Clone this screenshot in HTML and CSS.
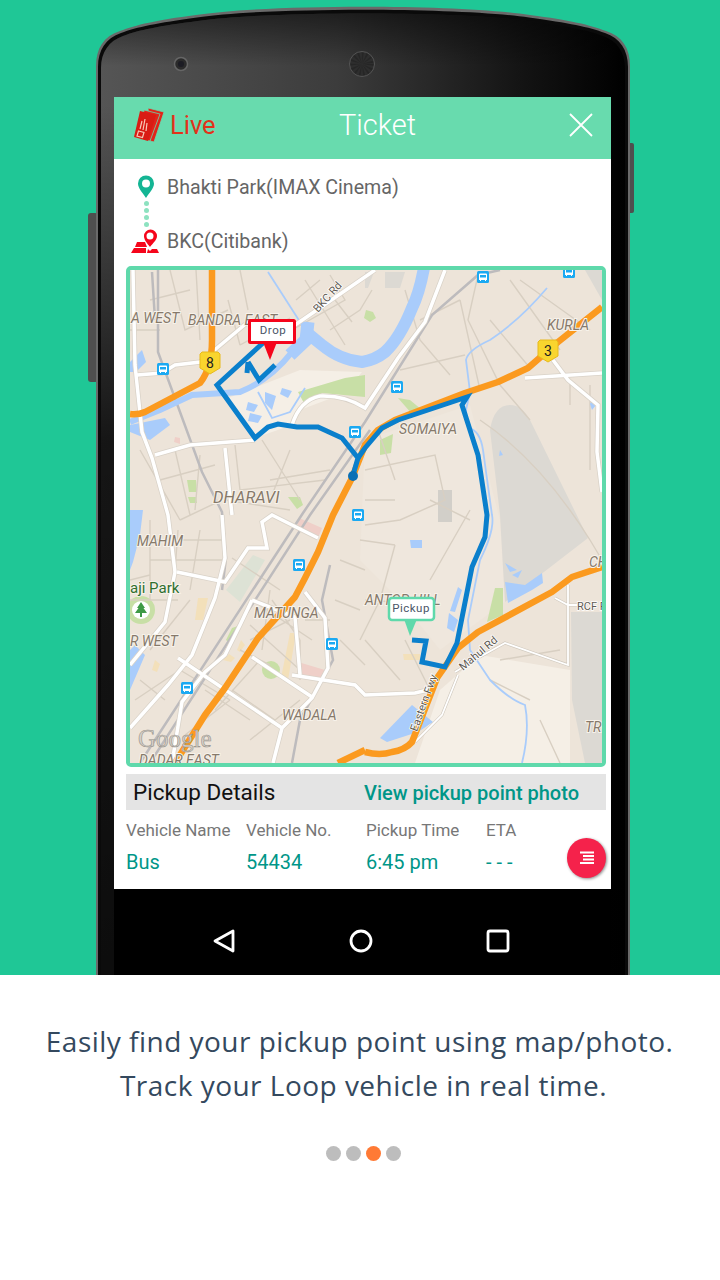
FILE: index.html
```html
<!DOCTYPE html>
<html lang="en">
<head>
  <meta charset="UTF-8" />
  <meta name="viewport" content="width=device-width, initial-scale=1.0" />
  <title>Loop - Live Ticket</title>
  <link rel="stylesheet" href="styles.css">
</head>
<body>

<section class="hero">
  <div class="phone">
    <svg class="phone-shell" width="552" height="967" viewBox="-10 0 552 967">
      <defs>
        <linearGradient id="bezel" x1="0" y1="0" x2="1" y2="0">
          <stop offset="0" stop-color="#555" />
          <stop offset="0.45" stop-color="#3c3c3c" />
          <stop offset="0.8" stop-color="#141414" />
          <stop offset="1" stop-color="#000" />
        </linearGradient>
        <linearGradient id="bezel-shade" gradientUnits="userSpaceOnUse" x1="0" y1="0" x2="0" y2="967">
          <stop offset="0" stop-color="#000" stop-opacity="0.55" />
          <stop offset="0.06" stop-color="#000" stop-opacity="0" />
          <stop offset="0.1" stop-color="#000" stop-opacity="0" />
          <stop offset="0.45" stop-color="#000" stop-opacity="0.75" />
          <stop offset="1" stop-color="#000" stop-opacity="0.85" />
        </linearGradient>
      </defs>
      <rect class="side-btn" x="-8" y="205" width="10" height="169" rx="3" />
      <rect class="side-btn" x="532" y="135" width="6" height="70" rx="2" />
      <path class="shell-rim" d="M0 967V58C0 40 8 28 24 23C40 17 60 12 100 7C170 -4 364 -4 434 7C474 12 494 17 510 23C526 28 534 40 534 58V967Z" />
      <path class="shell-line" d="M2 967V59C2 42 10 30 25 25C41 19 61 15 101 9.500C170 -1 364 -1 433 9.500C473 15 493 19 509 25C524 30 532 42 532 59V967Z" />
      <path class="shell-face" d="M5 967V60C5 44 13 33 27 28C43 22 63 18 102 13C170 3 364 3 432 13C471 18 491 22 507 28C521 33 529 44 529 60V967Z" />
      <path class="shell-shade" d="M5 967V60C5 44 13 33 27 28C43 22 63 18 102 13C170 3 364 3 432 13C471 18 491 22 507 28C521 33 529 44 529 60V967Z" />
      <circle class="camera" cx="85" cy="56" r="6.500" />
      <circle class="camera-lens" cx="85" cy="56" r="3" />
      <circle class="speaker" cx="266" cy="56" r="12.500" />
      <circle class="speaker-mesh" cx="266" cy="56" r="6" />
    </svg>

    <div class="screen">
      <header class="ticket-bar">
        <div class="live">
          <svg class="ticket-icon" width="32" height="36" viewBox="0 0 32 36">
            <path class="ticket-back" d="M14 1L30 5L20 35L16 34Z" />
            <path class="ticket-back" d="M10 3L26 7L16 34L6 32Z" />
            <path class="ticket-front" d="M6 4L22 8L14 34L0 30Z" />
            <path class="ticket-mark" d="M6 22L8 14M9 23L11 12M12 24L13 16" />
            <path class="ticket-mark" d="M4.500 24L10 25.500L8.500 30.500L3 29Z" />
          </svg>
          <span>Live</span>
        </div>
        <h1>Ticket</h1>
        <svg class="close-icon" width="24" height="24" viewBox="0 0 24 24">
          <path d="M1 1L23 23M23 1L1 23" />
        </svg>
      </header>

      <div class="route">
        <div class="route-row">
          <svg class="route-icon" width="32" height="26" viewBox="0 0 32 26">
            <path class="pin-start" fill-rule="evenodd" d="M16 24C12 18 8 14 8 9.500A8 8 0 0 1 24 9.500C24 14 20 18 16 24ZM16 5.500A4 4 0 1 0 16 13.500A4 4 0 0 0 16 5.500Z" />
          </svg>
          <span>Bhakti Park(IMAX Cinema)</span>
        </div>
        <div class="route-dots"><i></i><i></i><i></i><i></i></div>
        <div class="route-row">
          <svg class="route-icon" width="32" height="26" viewBox="0 0 32 26">
            <path class="pin-end" fill-rule="evenodd" d="M20 19C17 15 14 12 14 8A6.500 6.500 0 0 1 27 8C27 12 23 15 20 19ZM20 4.500A3.500 3.500 0 1 0 20 11.500A3.500 3.500 0 0 0 20 4.500Z" />
            <path class="pin-end" d="M7 14H15L17 19H5ZM4 20H16L16 25H1ZM18 21L20 23L22 21H27L29 25H17Z" />
          </svg>
          <span>BKC(Citibank)</span>
        </div>
      </div>

      <div class="map">
        <svg class="map-svg" width="472" height="493" viewBox="130 270 472 493">
          <defs>
            <symbol id="bus" viewBox="0 0 12 12">
              <rect class="bus-bg" width="12" height="12" rx="1.500" />
              <path class="bus-body" d="M3 2.500H9Q10 2.500 10 3.500V9H9V10H8V9H4V10H3V9H2V3.500Q2 2.500 3 2.500Z" />
              <rect class="bus-bg" x="3" y="4" width="6" height="2.500" />
            </symbol>
            <symbol id="shield" viewBox="0 0 22 24">
              <path class="shield" d="M3 1H19L21 3V17L11 23L1 17V3Z" />
            </symbol>
          </defs>

          <rect class="land" x="130" y="270" width="472" height="493" />
          <path class="land-light" d="M440 690L480 655L570 670V763H415Z" />
          <path class="land-light" d="M228 398L300 370L362 372L345 393L300 410L292 425L255 438Z" />
          <path class="land-mid" d="M365 440L470 405L500 520L505 602L440 650L400 600L360 560Z" />

          <!-- airport and grey blocks -->
          <path class="grey-block" d="M490 430Q494 405 510 405Q522 405 530 420L588 538L505 602L500 515Z" />
          <path class="grey-block" d="M571 612H602V763H585L572 700Z" />
          <path class="grey-dark" d="M438 490H452V522H438Z" />
          <path class="grey-block" d="M385 272H405L400 288H385Z" />
          <path class="grey-block" d="M585 270H602V300Z" />
          <path class="grey-block" d="M365 272H374L368 288H365Z" />

          <!-- parks and building blocks -->
          <path class="park" d="M298 392L345 378L365 375V397L322 393L305 405Z" />
          <path class="park" d="M398 398L410 400L422 410L412 414Z" />
          <path class="park" d="M380 440L393 434L391 453L380 455Z" />
          <path class="park" d="M187 480H196L197 492H189Z" />
          <path class="park" d="M188 497H196L197 503H190Z" />
          <path class="park" d="M288 497H300L303 505L297 509Z" />
          <path class="park" d="M495 588H503V615L487 622Z" />
          <path class="park" d="M232 628L238 626L232 645L226 640Z" />
          <path class="park" d="M366 310L373 312L376 318L370 322L364 318Z" />
          <path class="park-pale" d="M226 590L253 555L265 560L240 602Z" />
          <circle class="park" cx="141" cy="610" r="14" />
          <circle class="park" cx="271" cy="670" r="9" />
          <path class="block-tan" d="M198 598L208 598L203 620H195Z" />
          <path class="block-tan" d="M290 633L296 633L288 680L281 678Z" />
          <path class="block-tan" d="M403 654H420L420 660H404Z" />
          <path class="block-tan" d="M241 640L245 645L240 652L237 650Z" />
          <path class="block-tan" d="M229 654L235 658L231 662L223 660Z" />
          <path class="block-tan" d="M155 660L160 664L157 672L152 670Z" />
          <path class="block-pink" d="M299 518L322 528L318 538L296 530Z" />
          <path class="block-pink" d="M298 662L325 670L320 680L298 678Z" />
          <path class="block-pink" d="M175 437L180 438L180 444L174 442Z" />

          <!-- minor streets -->
          <g class="minor">
            <path d="M240 270L248 310M292 330L345 300L330 275M330 330L360 310L372 290M305 280L345 345M335 300L352 322M320 280L296 300" />
            <path d="M130 330H160M170 270L185 330L228 310M228 300L240 345M196 270L200 340M150 300L190 290M240 345L290 318" />
            <path d="M140 450L180 520M180 520L222 500M160 480L215 465M175 450L190 515M200 455L195 510" />
            <path d="M225 500L290 510M270 480L330 470M235 445L240 490M290 450L270 500M240 490L325 480M262 440L300 500" />
            <path d="M150 520L150 600M150 560H225M200 530L190 590M130 600H178M190 600L150 650M232 558L280 590M155 540H222M130 580L150 575M178 530L175 570" />
            <path d="M252 600L312 640M270 590L262 650M305 620H330M250 640L290 620M300 640V680M272 600L300 640M250 625L300 670M240 650L270 665" />
            <path d="M135 700L180 670M205 690L250 720M230 700L185 735M250 740L300 700M260 660L215 710M232 690L275 720M180 670L230 700M140 680L165 700" />
            <path d="M365 470L435 455L445 500L400 520L365 525M378 430L395 480M360 540L395 545M395 545L380 600M365 500L395 500" />
            <path d="M365 600L440 605M380 600L360 640M405 640L430 690M430 500L470 520M470 510L430 580M365 640L400 680M340 640L365 665" />
            <path d="M490 320L530 368M460 300L480 390M510 280L560 350M520 280L590 330M570 380V405M405 290L420 340L450 375M420 320L460 300M400 370L465 355" />
            <path d="M500 660L560 650M490 680L530 700M540 720L560 763M340 560L365 570M335 600L360 610" />
            <path d="M480 420Q540 460 590 540M478 275L468 320L500 385L530 420M590 540L602 560M590 385V470" />
          </g>

          <!-- rails -->
          <g class="rail">
            <path d="M140 763L303 513L365 422L432 315L478 275L500 270" />
            <path d="M150 763L310 515L370 430" />
            <path d="M158 270L158 352L202 472L222 512L226 558L222 590" />
            <path d="M330 565L322 600L333 660L300 720L292 763" />
            <path d="M152 272L155 320" />
          </g>

          <!-- water -->
          <path class="water-wide" d="M425 262Q420 292 412 308Q400 338 385 352Q375 360 362 362Q340 360 322 345L306 332" />
          <path class="water-fork" d="M308 322L306 340L290 355" />
          <path class="water-west" d="M292 352Q270 380 240 392L192 395L160 410L130 422" />
          <path class="water-thin" d="M268 272L302 325" />
          <path class="water-thin" d="M258 392L272 418L290 412L305 388" />
          <path class="water-fill" d="M130 362L142 350L146 362L136 372L130 372Z" />
          <path class="water-mid" d="M130 425L165 418L170 425L150 440L130 432" />
          <path class="water-fill" d="M130 510H143L140 535L133 562L130 570ZM130 690L145 655L135 645L130 650Z" />
          <path class="water-fill" d="M248 402L258 405L254 412L246 410ZM250 413L262 416L258 423L248 421ZM282 388L292 391L288 398L280 394ZM265 392L276 396L272 410L265 403Z" />
          <path class="water-fill" d="M458 587L462 590L455 612L450 611ZM449 613L458 620L454 632L447 628ZM410 540H422V548H411Z" />
          <path class="water-fill" d="M505 582L525 585L542 573L543 583L532 590L508 603ZM505 563L517 570L510 572ZM512 575L522 570L518 578Z" />
          <path class="water-fill" d="M412 705L433 722L418 732L387 742L380 738Z" />
          <path class="water-fill" d="M592 400L596 405L592 410L590 404ZM500 450L503 455L499 456Z" />
          <path class="water-thin" d="M547 288Q520 320 490 340Q468 350 466 360L470 392L466 410L468 428Q480 430 483 450L492 515Q495 530 480 560L468 620L470 650L490 680Q510 700 525 705Q530 730 522 763" />

          <!-- main white roads -->
          <g class="road-case">
            <path d="M133 270L135 365L142 432L152 458L168 515L175 572L165 622L130 665" />
            <path d="M222 515L225 558L215 598L192 655L168 685L130 728" />
            <path d="M445 270L425 322L398 358L365 408Q345 395 320 396Q300 400 292 425" />
            <path d="M177 572L225 582L248 548L267 548L262 522L272 515L318 538" />
            <path d="M252 600L240 625L225 655L205 672L182 702L172 763" />
            <path d="M305 592L325 618L328 668L312 698L282 728L273 763" />
            <path d="M178 658L282 728M252 657L312 697M292 675L355 685L365 695L415 693L428 690" />
            <path d="M252 600L295 617L300 675" />
            <path d="M525 378L602 373M553 360L568 380L598 405L597 452L602 492" />
            <path d="M137 375L162 373L175 365L200 362L217 348L248 322M295 325L375 270" />
            <path d="M155 455L190 445L255 440M225 448L232 515" />
          </g>
          <g class="road">
            <path d="M133 270L135 365L142 432L152 458L168 515L175 572L165 622L130 665" />
            <path d="M222 515L225 558L215 598L192 655L168 685L130 728" />
            <path d="M445 270L425 322L398 358L365 408Q345 395 320 396Q300 400 292 425" />
            <path d="M177 572L225 582L248 548L267 548L262 522L272 515L318 538" />
            <path d="M252 600L240 625L225 655L205 672L182 702L172 763" />
            <path d="M305 592L325 618L328 668L312 698L282 728L273 763" />
            <path d="M178 658L282 728M252 657L312 697M292 675L355 685L365 695L415 693L428 690" />
            <path d="M252 600L295 617L300 675" />
            <path d="M525 378L602 373M553 360L568 380L598 405L597 452L602 492" />
            <path d="M137 375L162 373L175 365L200 362L217 348L248 322M295 325L375 270" />
            <path d="M155 455L190 445L255 440M225 448L232 515" />
          </g>
          <path class="road-thin-case" d="M458 675L442 715L415 742M455 672L478 658L505 643L568 665L568 585M555 598L568 605L578 605" />
          <path class="road-thin" d="M458 675L442 715L415 742M455 672L478 658L505 643L568 665L568 585M555 598L568 605L578 605" />

          <!-- highways -->
          <g class="highway">
            <path d="M175 763L205 715L225 688L258 638L295 597L305 578L318 552L333 515L352 478L365 445L378 430L395 420L465 393L498 382L528 368L558 342L602 307" />
            <path d="M212 270V340Q212 368 200 383L145 412Q138 415 130 414" />
            <path d="M365 752Q380 756 392 752Q405 750 412 742L437 678L458 648L478 632L552 592L572 577L602 567" />
            <path d="M338 763L365 750" />
          </g>

          <!-- route -->
          <g class="route-line">
            <path d="M263 343L217 385L255 438L268 427L278 424L297 427L318 427L342 438L358 458L353 475" />
            <path d="M248 362L259 380L275 365M248 362L247 373" />
            <path d="M358 458L365 448L382 428L398 420L467 397L462 405L478 455L487 515L485 537L472 567L457 643L445 667L422 662L426 641L412 640" />
          </g>
          <circle class="route-stop" cx="353" cy="476" r="5" />

          <!-- labels -->
          <g class="map-label">
            <text x="131" y="323">A WEST</text>
            <text x="188" y="325">BANDRA EAST</text>
            <text x="547" y="330">KURLA</text>
            <text x="399" y="434">SOMAIYA</text>
            <text class="label-big" x="213" y="503">DHARAVI</text>
            <text x="137" y="546">MAHIM</text>
            <text x="130" y="646">R WEST</text>
            <text x="254" y="618">MATUNGA</text>
            <text x="282" y="720">WADALA</text>
            <text x="365" y="605">ANTOP HILL</text>
            <text x="589" y="567">CH</text>
            <text x="585" y="732">TRO</text>
            <text x="139" y="765">DADAR EAST</text>
          </g>
          <text class="park-label" x="130" y="593">aji Park</text>
          <text class="road-label" x="577" y="610">RCF R</text>
          <text class="road-label" transform="translate(318 313) rotate(-48)">BKC Rd</text>
          <text class="road-label" transform="translate(463 671) rotate(-40)">Mahul Rd</text>
          <text class="road-label" transform="translate(417 732) rotate(-70)">Eastern Fwy</text>
          <text class="google" x="138" y="747">Google</text>

          <!-- park tree -->
          <circle class="tree-bg" cx="141" cy="610" r="9" />
          <path class="tree" d="M141 602L145 608H143.500L147 613H135L138.500 608H137ZM140 613H142V617H140Z" />

          <!-- bus stops -->
          <use href="#bus" x="157" y="363" width="12" height="12" />
          <use href="#bus" x="391" y="381" width="12" height="12" />
          <use href="#bus" x="349" y="426" width="12" height="12" />
          <use href="#bus" x="352" y="509" width="12" height="12" />
          <use href="#bus" x="293" y="559" width="12" height="12" />
          <use href="#bus" x="326" y="638" width="12" height="12" />
          <use href="#bus" x="181" y="682" width="12" height="12" />
          <use href="#bus" x="477" y="271" width="12" height="12" />
          <use href="#bus" x="563" y="266" width="12" height="12" />

          <!-- highway shields -->
          <use href="#shield" x="199" y="351" width="22" height="24" />
          <text class="shield-num" x="210" y="368">8</text>
          <use href="#shield" x="537" y="339" width="22" height="24" />
          <text class="shield-num" x="548" y="356">3</text>

          <!-- markers -->
          <path class="drop-tip" d="M263 342H277L270 360Z" />
          <rect class="drop-box" x="249.500" y="320.500" width="45" height="22" rx="1" />
          <text class="marker-text" x="273" y="334">Drop</text>
          <path class="pickup-tip" d="M404 619H417L410 636Z" />
          <rect class="pickup-box" x="389" y="598" width="45" height="22" rx="3" />
          <text class="marker-text" x="411" y="612">Pickup</text>
        </svg>
      </div>

      <div class="pickup-bar">
        <h2>Pickup Details</h2>
        <a href="#">View pickup point photo</a>
      </div>

      <div class="details">
        <div class="detail"><span class="detail-name">Vehicle Name</span><span class="detail-value">Bus</span></div>
        <div class="detail"><span class="detail-name">Vehicle No.</span><span class="detail-value">54434</span></div>
        <div class="detail"><span class="detail-name">Pickup Time</span><span class="detail-value">6:45 pm</span></div>
        <div class="detail"><span class="detail-name">ETA</span><span class="detail-value">- - -</span></div>
        <button class="fab" type="button" aria-label="Menu">
          <svg width="16" height="14" viewBox="0 0 16 14"><path d="M1 1.500H15M4 5H15M4 8.500H15M1 12H15" /></svg>
        </button>
      </div>
    </div>

    <nav class="android-nav">
      <svg width="24" height="24" viewBox="0 0 24 24"><path d="M21 2V22L3 12Z" /></svg>
      <svg width="24" height="24" viewBox="0 0 24 24"><circle cx="12" cy="12" r="10" /></svg>
      <svg width="24" height="24" viewBox="0 0 24 24"><rect x="2" y="2" width="20" height="20" rx="2" /></svg>
    </nav>
  </div>
</section>

<section class="caption">
  <p>Easily find your pickup point using map/photo.&nbsp;<br>Track your Loop vehicle in real time.</p>
  <div class="dots"><i></i><i></i><i class="on"></i><i></i></div>
</section>

</body>
</html>
```
FILE: styles.css
```css
*,
*::before,
*::after {
  box-sizing: border-box;
  margin: 0;
  padding: 0;
}

body {
  font-family: Roboto, Arial, sans-serif;
  background-color: #fff;
  height: 1280px;
  overflow: hidden;
}

.hero {
  height: 975px;
  background-color: #1fc796;
  padding: 8px 0 0 96px;
  overflow: hidden;
}

.phone {
  position: relative;
  width: 534px;
  height: 967px;
  padding: 89px 19px 0 18px;
}

.phone-shell {
  position: absolute;
  left: -10px;
  top: 0;
  overflow: visible;
}

.side-btn { fill: #4f4f4f; }
.shell-rim { fill: #6a6a6a; }
.shell-line { fill: #0a0a0a; }
.shell-face { fill: url(#bezel); }
.shell-shade { fill: url(#bezel-shade); }
.camera { fill: #2b2b2b; stroke: #666; stroke-width: 1.500; }
.camera-lens { fill: #1c1c24; }
.speaker { fill: #2e2e2e; stroke: #555; }
.speaker-mesh { fill: none; stroke: #262626; stroke-dasharray: 1 1.500; stroke-width: 11; }

.screen {
  position: relative;
  width: 497px;
  height: 792px;
  background-color: #fff;
}

.ticket-bar {
  display: flex;
  align-items: center;
  height: 62px;
  padding: 0 18px 6px 20px;
  background-color: #68dbae;
}

.live {
  display: flex;
  align-items: center;
  gap: 4px;
  width: 205px;
  font-size: 25.500px;
  color: #e2321a;
}

.ticket-back { fill: #e2231a; stroke: #68dbae; stroke-width: 0.8; }
.ticket-front { fill: #d91c14; }
.ticket-mark { fill: none; stroke: #f7c9b8; stroke-width: 1.200; }

.ticket-bar h1 {
  font-size: 29px;
  font-weight: 300;
  color: #fff;
}

.close-icon {
  margin-left: auto;
}

.close-icon path {
  fill: none;
  stroke: #fff;
  stroke-width: 1.800;
}

.route {
  height: 107px;
  padding-top: 15px;
  font-size: 19.600px;
  color: #666;
}

.route-row {
  display: flex;
  align-items: center;
  gap: 5px;
  height: 26px;
  padding-left: 16px;
}

.pin-start { fill: #14b594; }
.pin-end { fill: #f5051b; }

.route-dots {
  display: flex;
  flex-direction: column;
  gap: 2px;
  height: 28px;
  padding: 1px 0 0 30px;
}

.route-dots i {
  width: 5px;
  height: 5px;
  border-radius: 50%;
  background-color: #8de2c0;
}

.map {
  width: 480px;
  height: 501px;
  margin-left: 12px;
  border: 4px solid #5fd9ab;
  border-radius: 5px;
  overflow: hidden;
}

.map-svg { display: block; }

.land { fill: #ede4d9; }
.land-light { fill: #f5efe6; }
.land-mid { fill: #efe7dd; }
.grey-block { fill: #dcd9d3; }
.grey-dark { fill: #d2cfc9; }
.park { fill: #c8dfa6; }
.park-pale { fill: #dde2d5; }
.block-tan { fill: #f3e0ba; }
.block-pink { fill: #efcfc8; }

.minor path { fill: none; stroke: #d8cfc2; stroke-width: 1.400; }
.rail path { fill: none; stroke: #bdbbbd; stroke-width: 2.500; }

.water-wide { fill: none; stroke: #a9ccfb; stroke-width: 12; }
.water-fork { fill: none; stroke: #a9ccfb; stroke-width: 13; }
.water-west { fill: none; stroke: #a9ccfb; stroke-width: 6; }
.water-thin { fill: none; stroke: #a9ccfb; stroke-width: 1.800; }
.water-mid { fill: #a9ccfb; }
.water-fill { fill: #a9ccfb; }

.road-case path { fill: none; stroke: #d9d2c8; stroke-width: 5; }
.road path { fill: none; stroke: #fff; stroke-width: 3.500; }
.road-thin-case { fill: none; stroke: #cfc8bd; stroke-width: 3; }
.road-thin { fill: none; stroke: #fff; stroke-width: 1.800; }

.highway path { fill: none; stroke: #fb9a1f; stroke-width: 6.500; stroke-linejoin: round; }

.route-line path { fill: none; stroke: #0a7fcc; stroke-width: 5; stroke-linejoin: miter; }
.route-stop { fill: #0a6fb5; }

.map-label text {
  font-size: 14px;
  font-style: italic;
  fill: #86796a;
  stroke: #f7f2ea;
  stroke-width: 2px;
  paint-order: stroke;
}

.map-label .label-big { font-size: 16.500px; }

.park-label {
  font-size: 15px;
  fill: #2f6e2f;
  stroke: #f7f2ea;
  stroke-width: 2px;
  paint-order: stroke;
}

.road-label {
  font-size: 11px;
  fill: #5f5a52;
  stroke: #fff;
  stroke-width: 1.500px;
  paint-order: stroke;
}

.google {
  font-family: "Liberation Serif", serif;
  font-size: 25px;
  fill: #d6d1c9;
  stroke: #96928b;
  stroke-width: 0.600px;
}

.tree-bg { fill: #fff; }
.tree { fill: #3e9a46; }

.bus-bg { fill: #1ba9f2; }
.bus-body { fill: #fff; }

.shield { fill: #f9d52e; stroke: #e7b91c; }
.shield-num { font-size: 14px; text-anchor: middle; fill: #222; }

.drop-tip { fill: #f5051b; }
.drop-box { fill: #fff; stroke: #f5051b; stroke-width: 3; }
.pickup-tip { fill: #5fd9ab; }
.pickup-box { fill: #fff; stroke: #5fd9ab; stroke-width: 2.500; }

.marker-text {
  font-size: 11.500px;
  letter-spacing: 0.5px;
  text-anchor: middle;
  fill: #4a5568;
}

.pickup-bar {
  display: flex;
  align-items: center;
  justify-content: space-between;
  width: 480px;
  height: 36px;
  margin: 7px 0 0 12px;
  padding: 0 27px 0 7px;
  background-color: #e4e4e4;
}

.pickup-bar h2 {
  font-size: 22.500px;
  font-weight: 400;
  color: #111;
}

.pickup-bar a {
  font-size: 20px;
  font-weight: 500;
  color: #009688;
  text-decoration: none;
  margin-top: 2px;
}

.details {
  position: relative;
  display: grid;
  grid-template-columns: repeat(4, 120px);
  margin: 10px 0 0 12px;
}

.detail {
  display: flex;
  flex-direction: column;
  gap: 10px;
}

.detail-name {
  font-size: 17px;
  line-height: 20px;
  color: #777;
}

.detail-value {
  font-size: 20px;
  line-height: 24px;
  color: #009688;
}

.fab {
  position: absolute;
  right: 5px;
  top: 18px;
  display: flex;
  align-items: center;
  justify-content: center;
  width: 39px;
  height: 40px;
  border: none;
  border-radius: 50%;
  background-color: #f5224b;
  box-shadow: 1px 1px 3px rgba(0, 0, 0, 0.45);
}

.fab path { fill: none; stroke: #fff; stroke-width: 1.800; }

.android-nav {
  position: relative;
  display: flex;
  justify-content: space-between;
  width: 497px;
  height: 86px;
  padding: 40px 101px 0 98px;
  background-color: #000;
}

.android-nav svg > * {
  fill: none;
  stroke: #fff;
  stroke-width: 2.800;
  stroke-linejoin: round;
}

.caption {
  padding-top: 44px;
  text-align: center;
}

.caption p {
  font-family: "Open Sans", Arial, sans-serif;
  font-size: 28px;
  line-height: 44px;
  letter-spacing: 0.48px;
  color: #34495e;
  margin-left: 7px;
}

.dots {
  display: flex;
  justify-content: center;
  gap: 5px;
  margin: 39px 0 0 7px;
}

.dots i {
  width: 15px;
  height: 15px;
  border-radius: 50%;
  background-color: #bdbdbd;
}

.dots .on { background-color: #ff7a35; }
```
